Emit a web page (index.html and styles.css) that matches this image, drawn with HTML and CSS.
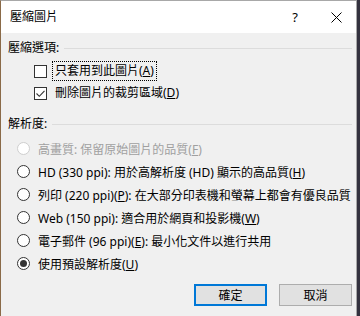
FILE: index.html
```html
<!DOCTYPE html>
<html lang="zh-Hant">
<head>
<meta charset="utf-8">
<link rel="stylesheet" href="styles.css">
</head>
<body>
<div class="dialog">
  <div class="titlebar">
    <span class="title">壓縮圖片</span>
    <span class="help">?</span>
    <span class="close">
      <svg width="11" height="11" viewBox="0 0 11 11"><path d="M0.5 0.5 L10.5 10.5 M10.5 0.5 L0.5 10.5" stroke="#000" stroke-width="1" fill="none"/></svg>
    </span>
  </div>
  <div class="content">
    <div class="group-head first"><span>壓縮選項:</span><i class="rule"></i></div>
    <div class="check-row">
      <span class="box"></span>
      <span class="label focus">只套用到此圖片(<u>A</u>)</span>
    </div>
    <div class="check-row">
      <span class="box">
        <svg width="11" height="11" viewBox="0 0 11 11"><path d="M1.5 5.5 L4.3 8.3 L9.5 2.8" stroke="#333" stroke-width="1.1" fill="none"/></svg>
      </span>
      <span class="label">刪除圖片的裁剪區域(<u>D</u>)</span>
    </div>
    <div class="group-head second"><span>解析度:</span><i class="rule"></i></div>
    <div class="radios">
      <div class="radio-row disabled"><span class="radio"></span><span>高畫質: 保留原始圖片的品質(<u>F</u>)</span></div>
      <div class="radio-row"><span class="radio"></span><span>HD (330 ppi): 用於高解析度 (HD) 顯示的高品質(<u>H</u>)</span></div>
      <div class="radio-row"><span class="radio"></span><span>列印 (220 ppi)(<u>P</u>): 在大部分印表機和螢幕上都會有優良品質</span></div>
      <div class="radio-row"><span class="radio"></span><span>Web (150 ppi): 適合用於網頁和投影機(<u>W</u>)</span></div>
      <div class="radio-row"><span class="radio"></span><span>電子郵件 (96 ppi)(<u>E</u>): 最小化文件以進行共用</span></div>
      <div class="radio-row"><span class="radio on"></span><span>使用預設解析度(<u>U</u>)</span></div>
    </div>
    <div class="buttons">
      <button class="btn primary">確定</button>
      <button class="btn">取消</button>
    </div>
  </div>
</div>
</body>
</html>
```
FILE: styles.css
```css
html, body {
  margin: 0;
  padding: 0;
}
body {
  background: #34323f;
  width: 360px;
  height: 316px;
  overflow: hidden;
  font-family: "Noto Sans", "Noto Sans CJK TC", sans-serif;
  font-size: 12px;
  color: #000;
}
.dialog {
  width: 355px;
  height: 330px;
  background: #f0f0f0;
  border-top: 1px solid #a8a8a8;
  border-right: 1px solid #a8a8a8;
  border-left: 1px solid #8a6a48;
}
.titlebar {
  height: 32px;
  background: #fff;
  display: flex;
  align-items: center;
  padding-left: 9px;
}
.title {
  flex: 1;
  line-height: 16px;
}
.help {
  width: 20px;
  text-align: center;
  font-size: 13px;
  margin-right: 26px;
}
.close {
  width: 11px;
  height: 11px;
  margin-right: 14px;
  display: flex;
}
.content {
  padding: 0 4px 0 7px;
}
.group-head {
  display: flex;
  align-items: center;
  height: 16px;
  line-height: 16px;
}
.group-head.first { margin-top: 7px; }
.group-head.second { margin-top: 12px; }
.rule {
  flex: 1;
  height: 1px;
  background: #dcdcdc;
  margin-left: 5px;
}
.check-row {
  display: flex;
  align-items: center;
  height: 22px;
  padding-left: 26px;
}
.group-head.first + .check-row { margin-top: 4px; }
.box {
  width: 11px;
  height: 11px;
  border: 1px solid #333;
  background: #fff;
  display: flex;
  flex: none;
}
.label {
  margin-left: 5px;
  padding: 1px 2px;
  line-height: 16px;
  border: 1px solid transparent;
}
.label.focus {
  border: 1px dotted #000;
}
.radios {
  margin-top: 5px;
}
.radio-row {
  display: flex;
  align-items: center;
  height: 23px;
  padding-left: 9px;
  white-space: nowrap;
}
.radio {
  width: 11px;
  height: 11px;
  border: 1px solid #333;
  border-radius: 50%;
  background: #fff;
  margin-right: 8px;
  flex: none;
  display: flex;
  align-items: center;
  justify-content: center;
}
.radio.on::after {
  content: "";
  width: 7px;
  height: 7px;
  border-radius: 50%;
  background: #333;
}
.disabled {
  color: #a0a0a0;
}
.disabled .radio {
  border-color: #cfcfcf;
}
.buttons {
  margin-top: 9px;
  display: flex;
  justify-content: flex-end;
  gap: 12px;
}
.btn {
  width: 73px;
  height: 22px;
  margin: 0;
  padding: 0;
  font-family: "Noto Sans", "Noto Sans CJK TC", sans-serif;
  font-size: 12px;
  color: #000;
  background: #e1e1e1;
  border: 1px solid #adadad;
}
.btn.primary {
  border: 2px solid #0078d7;
}
u {
  text-decoration: underline;
  text-underline-offset: 1px;
}
```
